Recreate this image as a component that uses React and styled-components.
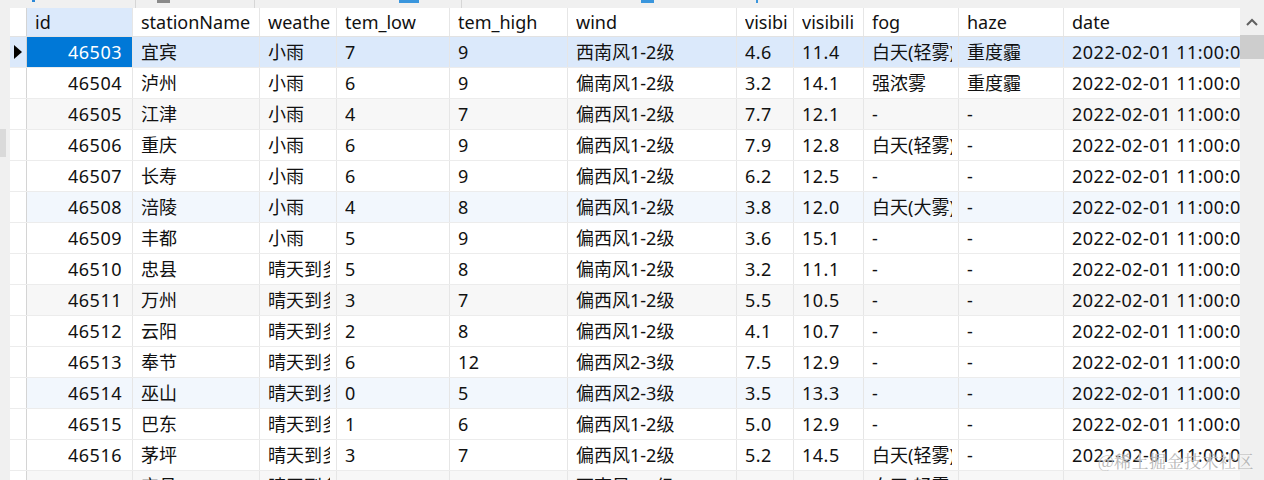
import styled, { createGlobalStyle } from "styled-components"

const GlobalStyle = createGlobalStyle`
  html, body {
    margin: 0;
    padding: 0;
    background: #f0f0f0;
  }
  * { box-sizing: border-box; }
`;

// last column runs past the visible edge, the grid clips it
const COLS = "17px 106px 127px 77px 113px 118px 169px 57px 70px 95px 105px 210px";

const Frame = styled.div`
  position: relative;
  width: 1264px;
  height: 480px;
  overflow: hidden;
  display: flex;
  flex-direction: column;
  background: #f0f0f0;
  font-family: "Segoe UI", "Noto Sans", "Noto Sans CJK SC", sans-serif;
  font-size: 18px;
  color: #111;
`;

const TopStrip = styled.div`
  height: 8px;
  flex: none;
  display: flex;
  align-items: flex-start;
`;

const Mark = styled.span`
  flex: none;
  margin-left: ${p => p.$gap}px;
  width: ${p => p.$w}px;
  height: ${p => p.$h || 2}px;
  background: ${p => p.$color};
`;

const Main = styled.div`
  flex: 1;
  display: flex;
  min-height: 0;
`;

const LeftEdge = styled.div`
  width: 10px;
  flex: none;
  display: flex;
  flex-direction: column;
  padding-top: 121px;
`;

const EdgeThumb = styled.div`
  width: 6px;
  height: 28px;
  background: #dadada;
`;

const Grid = styled.div`
  width: 1230px;
  flex: none;
  background: #ffffff;
  display: flex;
  flex-direction: column;
  overflow: hidden;
`;

const Row = styled.div`
  display: grid;
  grid-template-columns: ${COLS};
  height: ${p => (p.$header ? 29 : 31)}px;
  flex: none;
  background: ${p => p.$bg};
  border-bottom: 1px solid ${p => (p.$header ? "#e2e2e2" : "#ececec")};
`;

const Cell = styled.div`
  display: flex;
  align-items: center;
  justify-content: ${p => (p.$right ? "flex-end" : "flex-start")};
  padding: ${p => (p.$right ? "0 10px 0 0" : "0 6px 0 8px")};
  border-right: 1px solid #e6e6e6;
  overflow: hidden;
  min-width: 0;
  background: ${p => p.$bg || "transparent"};
  color: ${p => p.$color || "inherit"};
  line-height: 1;
`;

const Text = styled.span`
  display: block;
  min-width: 0;
  white-space: nowrap;
  overflow: hidden;
  letter-spacing: ${p => (p.$num ? "0.5px" : "0")};
  padding: 3px 0;
`;

const Gutter = styled.div`
  display: flex;
  align-items: center;
  justify-content: center;
  border-right: 1px solid #d4d4d4;
  background: ${p => p.$bg || "#ffffff"};
`;

const Scrollbar = styled.div`
  width: 24px;
  flex: none;
  display: flex;
  flex-direction: column;
  background: #f0f0f0;
`;

const ArrowBox = styled.div`
  height: 27px;
  display: flex;
  align-items: center;
  justify-content: center;
`;

const Thumb = styled.div`
  height: 24px;
  background: #cdcdcd;
`;

const Watermark = styled.div`
  position: absolute;
  right: 10px;
  bottom: 7px;
  font-family: "Noto Serif CJK SC", "Noto Sans CJK SC", serif;
  font-size: 17px;
  color: #b8b8b8;
  letter-spacing: 0.5px;
  text-shadow: 0 0 2px #fff;
`;

const headers = ["id", "stationName", "weathe", "tem_low", "tem_high", "wind", "visibi", "visibili", "fog", "haze", "date"];

const DATE = "2022-02-01 11:00:00";

const rows = [
  ["46503", "宜宾", "小雨", "7", "9", "西南风1-2级", "4.6", "11.4", "白天(轻雾)", "重度霾"],
  ["46504", "泸州", "小雨", "6", "9", "偏南风1-2级", "3.2", "14.1", "强浓雾", "重度霾"],
  ["46505", "江津", "小雨", "4", "7", "偏西风1-2级", "7.7", "12.1", "-", "-"],
  ["46506", "重庆", "小雨", "6", "9", "偏西风1-2级", "7.9", "12.8", "白天(轻雾)", "-"],
  ["46507", "长寿", "小雨", "6", "9", "偏西风1-2级", "6.2", "12.5", "-", "-"],
  ["46508", "涪陵", "小雨", "4", "8", "偏西风1-2级", "3.8", "12.0", "白天(大雾)", "-"],
  ["46509", "丰都", "小雨", "5", "9", "偏西风1-2级", "3.6", "15.1", "-", "-"],
  ["46510", "忠县", "晴天到多云", "5", "8", "偏南风1-2级", "3.2", "11.1", "-", "-"],
  ["46511", "万州", "晴天到多云", "3", "7", "偏西风1-2级", "5.5", "10.5", "-", "-"],
  ["46512", "云阳", "晴天到多云", "2", "8", "偏西风1-2级", "4.1", "10.7", "-", "-"],
  ["46513", "奉节", "晴天到多云", "6", "12", "偏西风2-3级", "7.5", "12.9", "-", "-"],
  ["46514", "巫山", "晴天到多云", "0", "5", "偏西风2-3级", "3.5", "13.3", "-", "-"],
  ["46515", "巴东", "晴天到多云", "1", "6", "偏西风1-2级", "5.0", "12.9", "-", "-"],
  ["46516", "茅坪", "晴天到多云", "3", "7", "偏西风1-2级", "5.2", "14.5", "白天(轻雾)", "-"],
  ["46517", "宜昌", "晴天到多云", "8", "9", "西南风1-2级", "7.0", "15.4", "白天(轻雾)", "-"],
];

function rowBg(i) {
  if (i === 0) return "#dbe9fb";
  if (i % 6 === 2) return "#f7f7f7";
  if (i % 6 === 5) return "#f2f7fd";
  return "#ffffff";
}

const isNum = v => /^[\d.\-: ]+$/.test(v) && v !== "-";

export default function App() {
  return (
    <>
      <GlobalStyle />
      <Frame>
        <TopStrip>
          <Mark $gap={32} $w={3} $color="#2b88d8" />
          <Mark $gap={100} $w={1} $h={8} $color="#d6d6d6" />
          <Mark $gap={21} $w={13} $h={3} $color="#8a8a8a" />
          <Mark $gap={84} $w={1} $h={8} $color="#d6d6d6" />
          <Mark $gap={144} $w={20} $h={3} $color="#3a96dd" />
          <Mark $gap={42} $w={1} $h={8} $color="#d6d6d6" />
          <Mark $gap={179} $w={13} $h={3} $color="#3a96dd" />
          <Mark $gap={102} $w={2} $h={3} $color="#3a96dd" />
        </TopStrip>
        <Main>
          <LeftEdge>
            <EdgeThumb />
          </LeftEdge>
          <Grid>
            <Row $header $bg="#ffffff">
              <Gutter />
              {headers.map((h, i) => (
                <Cell key={h} $bg={i === 0 ? "#dbe9fb" : undefined}>
                  <Text>{h}</Text>
                </Cell>
              ))}
            </Row>
            {rows.map((r, i) => (
              <Row key={r[0]} $bg={rowBg(i)}>
                <Gutter $bg={i === 0 ? "#dbe9fb" : undefined}>
                  {i === 0 && (
                    <svg width="8" height="14" viewBox="0 0 8 14">
                      <path d="M0 0 L8 7 L0 14 Z" fill="#000" />
                    </svg>
                  )}
                </Gutter>
                <Cell $right $bg={i === 0 ? "#0078d7" : undefined} $color={i === 0 ? "#ffffff" : undefined}>
                  <Text $num>{r[0]}</Text>
                </Cell>
                {r.slice(1).map((v, j) => (
                  <Cell key={j}>
                    <Text $num={isNum(v)}>{v}</Text>
                  </Cell>
                ))}
                <Cell>
                  <Text $num>{DATE}</Text>
                </Cell>
              </Row>
            ))}
          </Grid>
          <Scrollbar>
            <ArrowBox>
              <svg width="12" height="8" viewBox="0 0 12 8">
                <path d="M1 7 L6 2 L11 7" fill="none" stroke="#606060" strokeWidth="2" />
              </svg>
            </ArrowBox>
            <Thumb />
          </Scrollbar>
        </Main>
        <Watermark>@稀土掘金技术社区</Watermark>
      </Frame>
    </>
  )
}
